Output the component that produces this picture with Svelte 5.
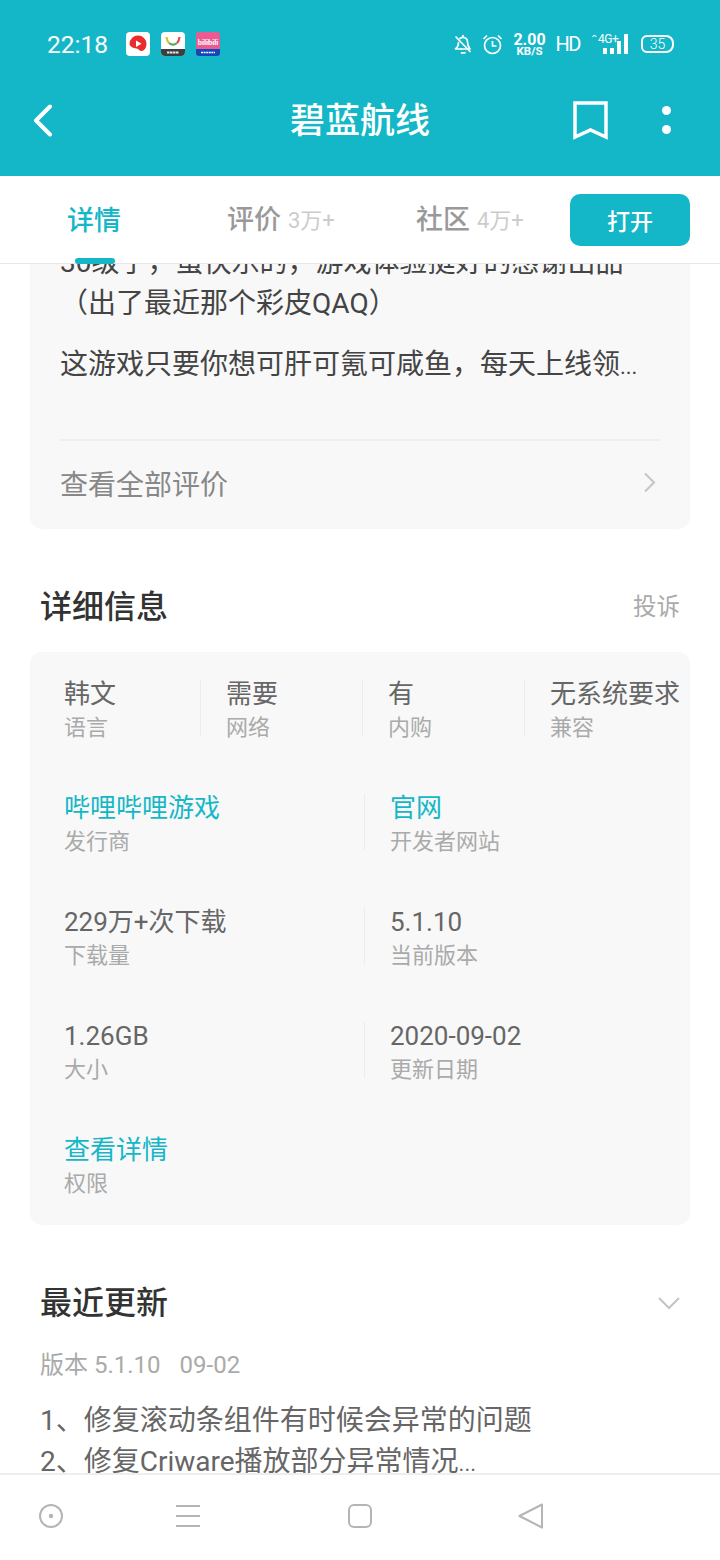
<script>
  const tabs = [
    { label: "评价", count: "3万+" },
    { label: "社区", count: "4万+" },
  ];
  const specs = [
    { value: "韩文", label: "语言" },
    { value: "需要", label: "网络" },
    { value: "有", label: "内购" },
    { value: "无系统要求", label: "兼容" },
  ];
  const rows = [
    [
      { value: "哔哩哔哩游戏", label: "发行商", link: true },
      { value: "官网", label: "开发者网站", link: true },
    ],
    [
      { value: "229万+次下载", label: "下载量" },
      { value: "5.1.10", label: "当前版本" },
    ],
    [
      { value: "1.26GB", label: "大小" },
      { value: "2020-09-02", label: "更新日期" },
    ],
    [{ value: "查看详情", label: "权限", link: true }],
  ];
</script>

<div class="page">
  <header class="top">
    <div class="status">
      <span class="time">22:18</span>
      <div class="apps">
        <svg width="24" height="24" viewBox="0 0 24 24">
          <rect width="24" height="24" rx="4" fill="#fff" />
          <path d="M12 3.5a8.5 8.5 0 0 1 8.500 8.500c0 3.500-2.200 7-5 7-2 0-2.500-2-5-2.500-3-.5-6.500-1.500-7-4.500A8.500 8.500 0 0 1 12 3.500z" fill="#ea2c2c" />
          <path d="M10 8.500l5.500 3.200L10 14.900z" fill="#fff" />
        </svg>
        <svg width="24" height="24" viewBox="0 0 24 24">
          <rect width="24" height="24" rx="4" fill="#fff" />
          <path d="M5.500 5c.2 2.500 1 4.500 2.500 6" fill="none" stroke="#e9b92b" stroke-width="2.200" />
          <path d="M8 11c2.500 2 5.500 2 8 0" fill="none" stroke="#4fae5a" stroke-width="2.200" />
          <path d="M16 11c1.500-1.500 2.300-3.500 2.500-6" fill="none" stroke="#e5484d" stroke-width="2.200" />
          <path d="M0 17h24v3a4 4 0 0 1-4 4H4a4 4 0 0 1-4-4z" fill="#3b3f42" />
          <path d="M6 20.500h12" stroke="#e6e6e6" stroke-width="2" stroke-dasharray="2.500 .5" />
        </svg>
        <svg width="24" height="24" viewBox="0 0 24 24">
          <rect width="24" height="24" rx="3" fill="#ec5a92" />
          <text x="12" y="13" class="bili" text-anchor="middle">bilibili</text>
          <path d="M0 17h24v4a3 3 0 0 1-3 3H3a3 3 0 0 1-3-3z" fill="#1546b8" />
          <path d="M5 20.500h14" stroke="#fff" stroke-width="1.500" stroke-dasharray="2 .6" />
        </svg>
      </div>
      <div class="indicators">
        <svg width="18" height="21" viewBox="0 0 18 21" fill="none" stroke="#fff" stroke-width="1.700" stroke-linecap="round" stroke-linejoin="round">
          <path d="M6 4.500a4.500 4.500 0 0 1 7.500 3.500c0 3 .8 5 2.500 7H7" />
          <path d="M4.500 8.500c0 2.800-1 5-3 6.500H7" />
          <path d="M2 3l14 14.500M7.500 18.800h3.500M9 1.500v1" />
        </svg>
        <svg width="21" height="21" viewBox="0 0 21 21" fill="none" stroke="#fff" stroke-width="1.700">
          <circle cx="10.500" cy="11.500" r="8" />
          <path d="M10.500 7v5h4M1.500 5l3.500-3.500M19.500 5L16 1.500" />
        </svg>
        <div class="speed"><b>2.00</b><b class="unit">KB/S</b></div>
        <span class="hd">HD</span>
        <div class="signal">
          <span class="arrow">⌃</span>
          <span class="net">4G+</span>
          <i class="b1"></i><i class="b2"></i><i class="b3"></i><i class="b4"></i>
        </div>
        <div class="battery"><span>35</span></div>
      </div>
    </div>
    <div class="titlebar">
      <div class="left">
        <svg width="19" height="33" viewBox="0 0 19 33" fill="none" stroke="#fff" stroke-width="4" stroke-linecap="round" stroke-linejoin="round">
          <path d="M17 2.500L3 16.500l14 14" />
        </svg>
      </div>
      <h1>碧蓝航线</h1>
      <div class="right">
        <svg width="35" height="39" viewBox="0 0 35 39" fill="none" stroke="#fff" stroke-width="3.500">
          <path d="M2 2h31v34l-15.500-7L2 36z" />
        </svg>
        <div class="more"><i></i><i></i></div>
      </div>
    </div>
  </header>

  <nav class="tabs">
    <div class="tab active">详情<span class="underline"></span></div>
    {#each tabs as t}
      <div class="tab">{t.label}<small>{t.count}</small></div>
    {/each}
    <div class="open">打开</div>
  </nav>

  <main class="scroll">
    <section class="card review">
      <p class="line">30级了，蛮快乐的，游戏体验挺好的感谢出品</p>
      <p class="line">（出了最近那个彩皮QAQ）</p>
      <p class="line para">这游戏只要你想可肝可氪可咸鱼，每天上线领<span class="dots">...</span></p>
      <div class="all">
        <span>查看全部评价</span>
        <svg width="13" height="21" viewBox="0 0 13 21" fill="none" stroke="#c4c4c4" stroke-width="2"><path d="M2 1.500l9 9-9 9" /></svg>
      </div>
    </section>

    <div class="head">
      <h2>详细信息</h2>
      <span>投诉</span>
    </div>

    <section class="card info">
      <div class="specs">
        {#each specs as s}
          <div class="spec">
            <div class="value">{s.value}</div>
            <div class="label">{s.label}</div>
          </div>
        {/each}
      </div>
      {#each rows as row}
        <div class="row">
          {#each row as c}
            <div class="cell">
              <div class="value" class:link={c.link}>{c.value}</div>
              <div class="label">{c.label}</div>
            </div>
          {/each}
        </div>
      {/each}
    </section>

    <div class="head">
      <h2>最近更新</h2>
      <svg width="22" height="13" viewBox="0 0 22 13" fill="none" stroke="#c4c4c4" stroke-width="2"><path d="M1 1l10 10L21 1" /></svg>
    </div>
    <div class="version"><span>版本 5.1.10</span><span>09-02</span></div>
    <p class="note first">1、修复滚动条组件有时候会异常的问题</p>
    <p class="note">2、修复Criware播放部分异常情况<span class="dots">...</span></p>
  </main>

  <footer class="nav">
    <svg width="24" height="24" viewBox="0 0 24 24" fill="none" stroke="#b5b5b5" stroke-width="2"><circle cx="12" cy="12" r="11" /><circle cx="12" cy="12" r="2.200" fill="#b5b5b5" stroke="none" /></svg>
    <svg width="24" height="24" viewBox="0 0 24 24" fill="none" stroke="#b5b5b5" stroke-width="2"><path d="M0 2h24M0 12h24M0 22h24" /></svg>
    <svg width="24" height="24" viewBox="0 0 24 24" fill="none" stroke="#b5b5b5" stroke-width="2"><rect x="1" y="1" width="22" height="22" rx="5" /></svg>
    <svg width="25" height="26" viewBox="0 0 25 26" fill="none" stroke="#b5b5b5" stroke-width="2" stroke-linejoin="round"><path d="M24 1.500L1.500 13 24 24.500z" /></svg>
  </footer>
</div>

<style>
  :global(body) {
    margin: 0;
    background: #fff;
  }

  .page {
    width: 720px;
    height: 1560px;
    display: flex;
    flex-direction: column;
    overflow: hidden;
    font-family: "Roboto", "Noto Sans CJK SC", sans-serif;
    color: #666;
  }

  .top {
    height: 176px;
    flex: none;
    background: #14b7c7;
    color: #fff;
  }

  .status {
    height: 88px;
    display: flex;
    align-items: center;
    padding: 0 46px 0 47px;
  }

  .time {
    font-size: 24.5px;
    width: 79px;
  }

  .apps {
    display: flex;
    gap: 11px;
  }

  .bili {
    font-family: "Roboto", sans-serif;
    font-size: 7.5px;
    font-weight: 700;
    fill: #fff;
  }

  .indicators {
    margin-left: auto;
    display: flex;
    align-items: center;
    gap: 10px;
  }

  .speed {
    display: flex;
    flex-direction: column;
    align-items: center;
    font-size: 16px;
    line-height: 13px;
  }

  .speed .unit {
    font-size: 11.5px;
    line-height: 10px;
  }

  .hd {
    font-size: 20px;
    letter-spacing: -1.5px;
  }

  .signal {
    position: relative;
    width: 38px;
    height: 20px;
    display: flex;
    align-items: flex-end;
    gap: 3px;
    justify-content: flex-end;
  }

  .signal i {
    width: 4px;
    background: #fff;
  }

  .b1 { height: 6px; }
  .b2 { height: 6px; }
  .b3 { height: 13px; }
  .b4 { height: 20px; }

  .net {
    position: absolute;
    left: 8px;
    top: -1px;
    font-size: 12px;
    line-height: 12px;
    letter-spacing: -0.5px;
  }

  .arrow {
    position: absolute;
    left: 0;
    top: 0;
    font-size: 10px;
    line-height: 10px;
  }

  .battery {
    margin-left: 3px;
    width: 33px;
    height: 18px;
    box-sizing: border-box;
    border: 2px solid #fff;
    border-radius: 6px 8px 8px 6px;
    display: flex;
    align-items: center;
    justify-content: center;
    font-size: 14px;
    font-weight: 300;
  }

  .titlebar {
    height: 64px;
    display: grid;
    grid-template-columns: 1fr auto 1fr;
    align-items: center;
  }

  .left {
    padding-left: 33px;
    display: flex;
  }

  h1 {
    margin: 0;
    padding-top: 3px;
    font-size: 35px;
    line-height: 46px;
    font-weight: 500;
  }

  .right {
    display: flex;
    align-items: center;
    justify-content: flex-end;
    gap: 54px;
    padding-right: 49px;
  }

  .more {
    display: flex;
    flex-direction: column;
    gap: 10px;
  }

  .more i {
    width: 9px;
    height: 9px;
    border-radius: 50%;
    background: #fff;
  }

  .tabs {
    height: 88px;
    flex: none;
    display: grid;
    grid-template-columns: 160px 189px 1fr 120px;
    align-items: center;
    padding: 0 30px 0 67px;
    background: #fff;
    border-bottom: 1px solid #e8e8e8;
    z-index: 1;
    box-sizing: border-box;
  }

  .tab {
    position: relative;
    padding-top: 2px;
    font-size: 27px;
    line-height: 36px;
    font-weight: 500;
    color: #999;
    white-space: nowrap;
  }

  .tab.active {
    color: #14b7c7;
  }

  .tab small {
    font-size: 22px;
    font-weight: 400;
    color: #ccc;
    margin-left: 7px;
    vertical-align: 1px;
  }

  .underline {
    position: absolute;
    left: 8px;
    top: 57px;
    width: 40px;
    height: 6px;
    border-radius: 3px;
    background: #14b7c7;
  }

  .open {
    height: 52px;
    border-radius: 10px;
    background: #14b7c7;
    color: #fff;
    font-size: 23px;
    font-weight: 500;
    display: flex;
    align-items: center;
    justify-content: center;
  }

  .scroll {
    flex: 1;
    overflow: hidden;
    padding: 0 30px;
  }

  .card {
    background: #f8f8f8;
    border-radius: 12px;
  }

  .review {
    margin-top: -22px;
    padding: 0 30px;
  }

  .line {
    margin: 0;
    font-size: 28px;
    line-height: 41px;
    color: #444;
    white-space: nowrap;
  }

  .line.para {
    margin-top: 20px;
  }

  .dots {
    font-size: 22px;
  }

  .all {
    margin-top: 52px;
    height: 90px;
    box-sizing: border-box;
    padding: 0 4px 5px 0;
    border-top: 2px solid #eee;
    display: flex;
    align-items: center;
    justify-content: space-between;
    font-size: 28px;
    color: #888;
  }

  .head {
    display: flex;
    align-items: center;
    justify-content: space-between;
    padding: 55px 10px 22px;
    height: 46px;
  }

  h2 {
    margin: 0;
    font-size: 32px;
    line-height: 46px;
    font-weight: 500;
    color: #333;
  }

  .head span {
    font-size: 23.5px;
    margin-bottom: 4px;
    color: #aaa;
  }

  .info {
    padding: 27px 0 0 34px;
    height: 573px;
    box-sizing: border-box;
  }

  .specs {
    display: grid;
    grid-template-columns: repeat(4, 162px);
  }

  .spec,
  .cell {
    position: relative;
    white-space: nowrap;
  }

  .spec + .spec::before,
  .cell + .cell::before {
    content: "";
    position: absolute;
    left: -26px;
    top: 1px;
    width: 1px;
    height: 56px;
    background: #ececec;
  }

  .row {
    display: grid;
    grid-template-columns: 326px 1fr;
    margin-top: 50px;
  }

  .value {
    font-size: 26px;
    line-height: 30px;
    color: #666;
  }

  .value.link {
    color: #14b7c7;
  }

  .label {
    margin-top: 4px;
    font-size: 22px;
    line-height: 30px;
    color: #aaa;
  }

  .version {
    display: flex;
    gap: 19px;
    font-size: 24px;
    line-height: 30px;
    color: #aaa;
    padding: 0 10px;
    margin-top: 2px;
  }

  .note {
    margin: 0;
    padding: 0 10px;
    font-size: 28px;
    line-height: 41px;
    color: #666;
    white-space: nowrap;
  }

  .note.first {
    margin-top: 20px;
  }

  .nav {
    height: 87px;
    flex: none;
    background: #fff;
    border-top: 2px solid #eee;
    display: grid;
    grid-template-columns: 102px 172px 172px 168px;
    align-items: center;
    justify-items: center;
    padding-bottom: 3px;
    box-sizing: border-box;
    z-index: 1;
  }
</style>
